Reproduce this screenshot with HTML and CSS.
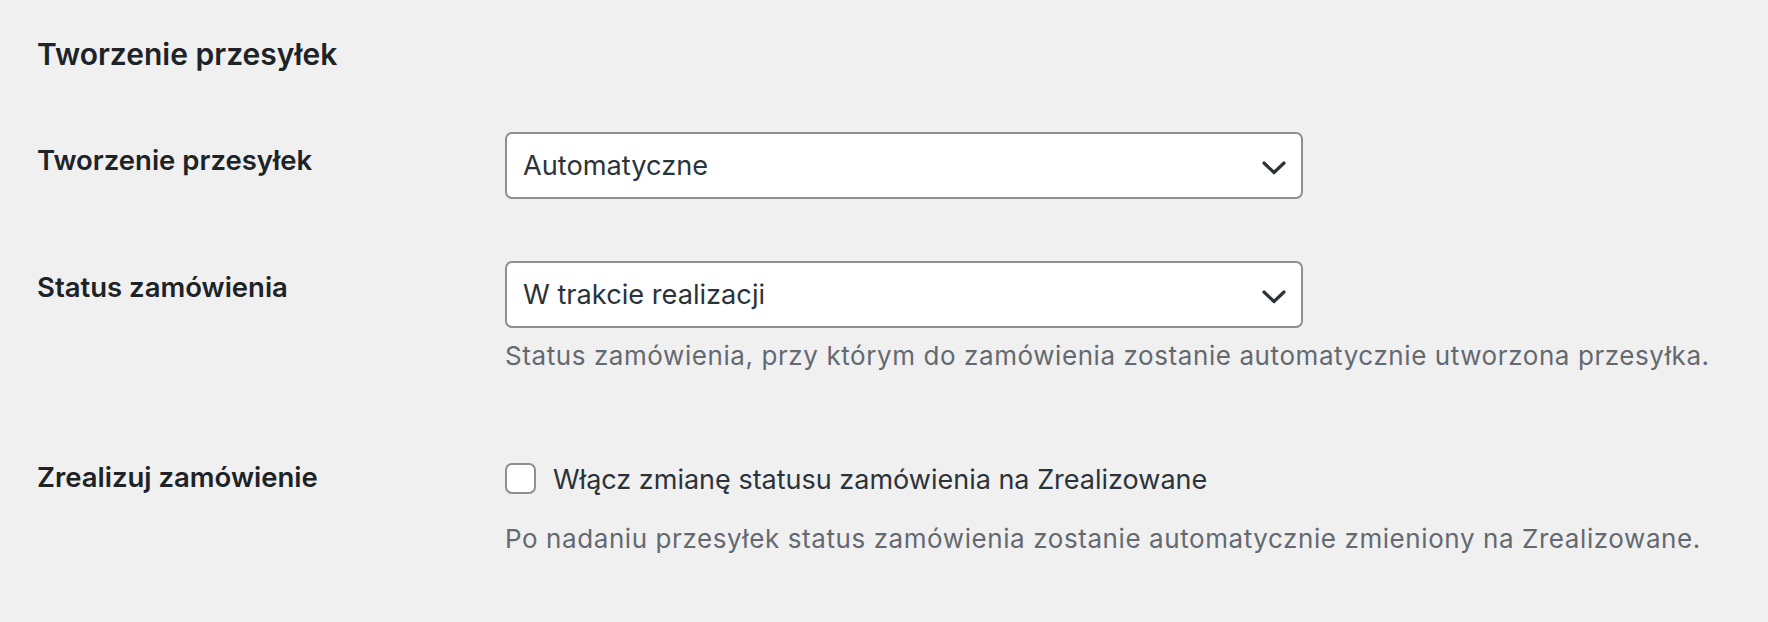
FILE: index.html
```html
<!DOCTYPE html>
<html lang="pl">
<head>
<meta charset="utf-8">
<title>Tworzenie przesyłek</title>
<link rel="stylesheet" href="styles.css">
</head>
<body>
<div class="page">
  <h2 class="section-title">Tworzenie przesyłek</h2>

  <div class="row row-1">
    <div class="label">Tworzenie przesyłek</div>
    <div class="field">
      <div class="select">
        <span class="select-value">Automatyczne</span>
        <svg class="chevron" width="24" height="14" viewBox="0 0 24 14" aria-hidden="true"><path d="M2 2 L12 11.5 L22 2" fill="none" stroke="#2c3338" stroke-width="3.2" stroke-linecap="round" stroke-linejoin="round"/></svg>
      </div>
    </div>
  </div>

  <div class="row row-2">
    <div class="label">Status zamówienia</div>
    <div class="field">
      <div class="select">
        <span class="select-value">W trakcie realizacji</span>
        <svg class="chevron" width="24" height="14" viewBox="0 0 24 14" aria-hidden="true"><path d="M2 2 L12 11.5 L22 2" fill="none" stroke="#2c3338" stroke-width="3.2" stroke-linecap="round" stroke-linejoin="round"/></svg>
      </div>
      <p class="desc desc-1">Status zamówienia, przy którym do zamówienia zostanie automatycznie utworzona przesyłka.</p>
    </div>
  </div>

  <div class="row row-3">
    <div class="label">Zrealizuj zamówienie</div>
    <div class="field">
      <label class="check-line">
        <input type="checkbox" class="checkbox">
        <span>Włącz zmianę statusu zamówienia na Zrealizowane</span>
      </label>
      <p class="desc desc-2">Po nadaniu przesyłek status zamówienia zostanie automatycznie zmieniony na Zrealizowane.</p>
    </div>
  </div>
</div>
</body>
</html>
```

FILE: styles.css
```css
html, body {
  margin: 0;
  padding: 0;
  background: #f0f0f1;
}

body {
  font-family: Inter, "Noto Sans", "Liberation Sans", sans-serif;
  color: #1d2327;
}

.page {
  padding: 34px 0 0 37px;
}

.section-title {
  margin: 0;
  font-size: 30px;
  line-height: 40px;
  font-weight: 600;
  color: #1d2327;
}

.row {
  display: flex;
  align-items: flex-start;
}

.row-1 {
  margin-top: 58px;
}

.row-2 {
  margin-top: 62px;
}

.row-3 {
  margin-top: 83px;
}

.label {
  width: 468px;
  flex: none;
  font-size: 27.5px;
  line-height: 40px;
  font-weight: 600;
  color: #1d2327;
}

.row-1 .label {
  padding-top: 8px;
}

.row-2 .label {
  padding-top: 6px;
}

.row-3 .label {
  padding-top: 0;
}

.field {
  display: flex;
  flex-direction: column;
}

.select {
  box-sizing: border-box;
  width: 798px;
  height: 67px;
  border: 2px solid #8c8f94;
  border-radius: 7px;
  background: #fff;
  display: flex;
  align-items: center;
  justify-content: space-between;
  padding: 0 15px 0 16px;
}

.select-value {
  font-size: 27.2px;
  line-height: 40px;
  color: #2c3338;
}

.chevron {
  display: block;
  margin-top: 5px;
}

.desc {
  margin: 0;
  font-size: 26px;
  line-height: 36px;
  letter-spacing: 0.58px;
  color: #646970;
}

.desc-1 {
  margin-top: 10px;
}

.check-line {
  display: flex;
  align-items: center;
  margin-top: 3px;
  font-size: 27px;
  line-height: 40px;
  color: #2c3338;
}

.checkbox {
  -webkit-appearance: none;
  appearance: none;
  box-sizing: border-box;
  width: 31px;
  height: 31px;
  margin: 0 17px 0 0;
  border: 2px solid #8c8f94;
  border-radius: 7px;
  background: #fff;
  flex: none;
  position: relative;
  top: -2px;
}

.desc-2 {
  margin-top: 21px;
}
```
